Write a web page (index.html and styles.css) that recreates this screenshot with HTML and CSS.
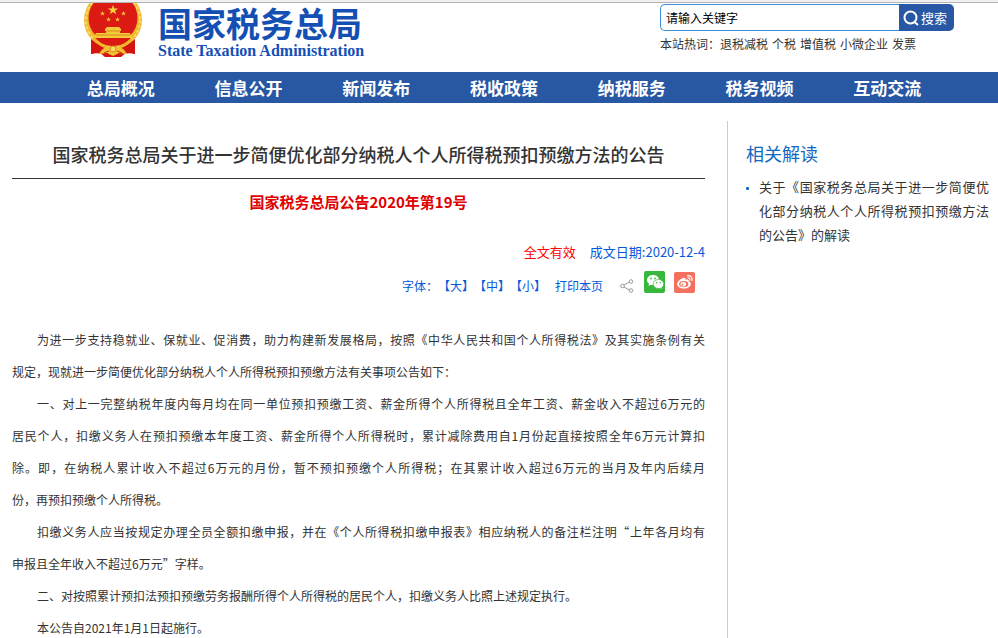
FILE: index.html
```html
<!DOCTYPE html>
<html lang="zh-CN">
<head>
<meta charset="utf-8">
<title>国家税务总局</title>
<link rel="stylesheet" href="styles.css">
</head>
<body>
<header class="header">
  <a class="brand" href="#">
    <svg class="emblem" viewBox="0 0 58 54" aria-hidden="true">
      <path d="M9 36 L7 51 L15 49 L21 54 H37 L43 49 L51 51 L49 36Z" fill="#d3140f"/>
      <circle cx="29" cy="17" r="29" fill="#efb92f"/>
      <circle cx="29" cy="17" r="27" fill="none" stroke="#f9dc68" stroke-width="2" stroke-dasharray="3 2"/>
      <circle cx="29" cy="15" r="24.500" fill="#dc1a14"/>
      <path d="M29 2l1.300 3.500h3.800L31 7.700l1.200 3.600L29 9.100l-3.200 2.200L27 7.700l-3.100-2.200h3.800z" fill="#f7d23c"/>
      <path d="M18.500 8l.7 1.700h1.800l-1.400 1.100.5 1.800-1.600-1-1.600 1 .5-1.800-1.400-1.100h1.800zM39.500 8l.7 1.700h1.800l-1.400 1.100.5 1.800-1.600-1-1.600 1 .5-1.800-1.400-1.100h1.800zM24.500 14l.7 1.700h1.800l-1.400 1.100.5 1.800-1.600-1-1.600 1 .5-1.800-1.400-1.100h1.800zM33.500 14l.7 1.700h1.800l-1.400 1.100.5 1.800-1.600-1-1.600 1 .5-1.800-1.400-1.100h1.800z" fill="#f2c233"/>
      <path d="M21 26l2-2h12l2 2v2h-1v2h10l2 5H10l2-5h10v-2h-1z" fill="#f4c93a"/>
      <path d="M22 28h14M12 32h34" stroke="#d98a1a" stroke-width="1"/>
      <path d="M11 35h36c-4 5-10 8-18 8s-14-3-18-8z" fill="#dc1a14"/>
      <path d="M7 36c4 4 9 7 15 8l-3 7c-5-1-9-1-12 0zM51 36c-4 4-9 7-15 8l3 7c5-1 9-1 12 0z" fill="#d3140f"/>
      <path d="M10 36c4 4 8 7 13 8M48 36c-4 4-8 7-13 8" stroke="#efb62b" stroke-width="3" fill="none"/>
      <path d="M15 51c3-6 8-8 14-8s11 2 14 8l-8-1-6 3-6-3z" fill="#f3c033"/>
      <circle cx="29" cy="46" r="3" fill="#f9dc63" stroke="#d58b19"/>
      <path d="M20 50l5-2M38 50l-5-2" stroke="#c92d10"/>
    </svg>
    <span class="brand-text">
      <span class="brand-cn">国家税务总局</span>
      <span class="brand-en">State Taxation Administration</span>
    </span>
  </a>
  <div class="search-area">
    <form class="search">
      <input class="search-input" type="text" value="请输入关键字" aria-label="请输入关键字">
      <button class="search-button" type="button">
        <svg class="search-icon" viewBox="0 0 16 16" aria-hidden="true"><circle cx="7.500" cy="7.500" r="6"/><path d="M11.500 12l3.500 3"/></svg>搜索
      </button>
    </form>
    <div class="hot"><span>本站热词：</span><a href="#">退税减税</a><a href="#">个税</a><a href="#">增值税</a><a href="#">小微企业</a><a href="#">发票</a></div>
  </div>
</header>
<nav class="nav">
  <a href="#">总局概况</a><a href="#">信息公开</a><a href="#">新闻发布</a><a href="#">税收政策</a><a href="#">纳税服务</a><a href="#">税务视频</a><a href="#">互动交流</a>
</nav>
<main class="main">
  <article class="article">
    <h1 class="title">国家税务总局关于进一步简便优化部分纳税人个人所得税预扣预缴方法的公告</h1>
    <p class="number">国家税务总局公告2020年第19号</p>
    <div class="meta"><span class="valid">全文有效</span><span>成文日期:2020-12-4</span></div>
    <div class="tools">
      <span>字体：</span><button type="button">【大】</button><button type="button">【中】</button><button type="button">【小】</button>
      <button class="print" type="button">打印本页</button>
      <svg class="share" viewBox="0 0 14 14" aria-hidden="true"><path d="M4 6l5.500-3M4 8l5.500 3"/><circle cx="2.500" cy="7" r="1.800"/><circle cx="11" cy="2.500" r="1.800"/><circle cx="11" cy="11.500" r="1.800"/></svg>
      <a class="social" href="#" aria-label="微信">
        <svg viewBox="0 0 22 22"><rect width="21" height="22" rx="2" fill="#37b83c"/><path d="M9 4C5.400 4 3 6.200 3 9c0 1.600.8 2.900 2 3.800L4.500 15l2.400-1.200c.7.200 1.300.2 2.100.2 3.600 0 6-2.200 6-5s-2.400-5-6-5z" fill="#fff"/><path d="M14.500 8.500c-3 0-5.300 2-5.300 4.500s2.300 4.500 5.300 4.500c.7 0 1.200-.1 1.800-.3l2 1.100-.5-1.800c1.200-.8 2-2 2-3.500 0-2.500-2.300-4.500-5.300-4.500z" fill="#fff" stroke="#37b83c" stroke-width=".7"/><g fill="#37b83c"><circle cx="7" cy="7.500" r=".9"/><circle cx="11" cy="7.500" r=".9"/><circle cx="12.800" cy="11.800" r=".8"/><circle cx="16.300" cy="11.800" r=".8"/></g></svg>
      </a>
      <a class="social" href="#" aria-label="微博">
        <svg viewBox="0 0 22 22"><rect y="1" width="21" height="21" rx="2" fill="#f5705f"/><path d="M9 7c1.600-.7 2.800 0 2.300 1.800 2-.8 3.800-.3 3.300 1.500 1.400.5 2.200 1.400 2.200 2.600 0 2.500-3 4.600-6.900 4.600S3.200 15.600 3.200 13C3.200 10.800 6.300 8 9 7z" fill="#fff"/><ellipse cx="9.700" cy="13.100" rx="4.600" ry="3.200" fill="#f5705f"/><ellipse cx="9.200" cy="13.300" rx="2.700" ry="2.300" fill="#fff"/><circle cx="8.500" cy="13.700" r="1" fill="#f5705f"/><path d="M13.500 4.800c3-.6 5.300 1.700 4.500 4.700M13.800 7c1.500-.3 2.500.7 2.100 2.100" fill="none" stroke="#fff" stroke-width="1.200" stroke-linecap="round"/></svg>
      </a>
    </div>
    <div class="content">
      <p><span class="full">为进一步支持稳就业、保就业、促消费，助力构建新发展格局，按照《中华人民共和国个人所得税法》及其实施条例有关</span>规定，现就进一步简便优化部分纳税人个人所得税预扣预缴方法有关事项公告如下：</p>
      <p><span class="full">一、对上一完整纳税年度内每月均在同一单位预扣预缴工资、薪金所得个人所得税且全年工资、薪金收入不超过6万元的</span><span class="full next">居民个人，扣缴义务人在预扣预缴本年度工资、薪金所得个人所得税时，累计减除费用自1月份起直接按照全年6万元计算扣</span><span class="full next">除。即，在纳税人累计收入不超过6万元的月份，暂不预扣预缴个人所得税；在其累计收入超过6万元的当月及年内后续月</span>份，再预扣预缴个人所得税。</p>
      <p><span class="full">扣缴义务人应当按规定办理全员全额扣缴申报，并在《个人所得税扣缴申报表》相应纳税人的备注栏注明“上年各月均有</span>申报且全年收入不超过6万元”字样。</p>
      <p class="short">二、对按照累计预扣法预扣预缴劳务报酬所得个人所得税的居民个人，扣缴义务人比照上述规定执行。</p>
      <p class="short">本公告自2021年1月1日起施行。</p>
    </div>
  </article>
  <aside class="aside">
    <h2 class="aside-title">相关解读</h2>
    <ul class="related">
      <li><a href="#">关于《国家税务总局关于进一步简便优化部分纳税人个人所得税预扣预缴方法的公告》的解读</a></li>
    </ul>
  </aside>
</main>
</body>
</html>
```
FILE: styles.css
```css
* { box-sizing: border-box; }
html { scrollbar-width: none; }
body {
  margin: 0;
  min-height: 100vh;
  display: flex;
  flex-direction: column;
  background: #fff;
  color: #333;
  font: 12px/24px "Noto Sans CJK SC", sans-serif;
  text-spacing-trim: space-all;
}
a { color: inherit; text-decoration: none; }
h1, h2, p, ul { margin: 0; padding: 0; font-weight: 400; }
button { border: 0; padding: 0; background: none; color: inherit; font: inherit; }

.header {
  display: flex;
  justify-content: space-between;
  height: 72px;
  padding: 1px 44px 0 84px;
  border-top: 2px solid #f0f0f0;
  box-shadow: inset 0 1px #b4b4b4;
}
.brand { display: flex; gap: 16px; }
.emblem { width: 58px; height: 54px; }
.brand-text { display: flex; flex-direction: column; color: #1450b4; font-weight: 700; white-space: nowrap; }
.brand-cn { font-size: 34px; line-height: 40px; }
.brand-en { font: 700 16px/16px "Liberation Serif", serif; }

.search-area { width: 294px; padding-top: 1px; }
.search { display: flex; height: 27px; }
.search-input {
  flex: 1;
  min-width: 0;
  padding: 0 5px;
  border: 1px solid #3a8dd8;
  border-right: 0;
  border-radius: 5px 0 0 5px;
  color: #000;
  font: inherit;
}
.search-button {
  display: flex;
  align-items: center;
  gap: 2px;
  width: 55px;
  padding-left: 4px;
  border-radius: 0 5px 5px 0;
  background: #2857a3;
  color: #fff;
  font-size: 13px;
}
.search-icon { width: 16px; height: 16px; fill: none; stroke: #fff; stroke-width: 2; }
.hot { display: flex; margin-top: 1px; white-space: nowrap; }
.hot a + a { margin-left: 4px; }

.nav {
  display: grid;
  grid-template-columns: repeat(7, 1fr);
  padding: 0 47px 0 57px;
  background: #2857a3;
  color: #fff;
  font-size: 17px;
  font-weight: 700;
  line-height: 31px;
  text-align: center;
}

.main { flex: 1; display: flex; gap: 22px; padding: 18px 0 0 12px; }
.article { flex: 1; min-width: 0; }
.title {
  margin-top: 17px;
  padding-bottom: 8px;
  border-bottom: 1px solid #333;
  font-size: 18px;
  font-weight: 500;
  line-height: 32px;
  text-align: center;
}
.number { margin-top: 11px; color: #e00000; font-size: 15px; font-weight: 700; text-align: center; }
.meta { display: flex; justify-content: flex-end; gap: 14px; margin-top: 26px; color: #0559d8; font-size: 13px; }
.valid { color: #f00; }
.tools {
  display: flex;
  justify-content: flex-end;
  margin-top: 7px;
  padding-right: 9px;
  color: #0559d8;
  line-height: 30px;
}
.print { margin-left: 9px; }
.share { width: 14px; height: 14px; margin: 8px 10px 0 17px; fill: none; stroke: #999; }
.social { width: 22px; height: 22px; }
.social + .social { margin-left: 8px; }
.social svg { display: block; }

.content { margin-top: 23px; line-height: 32px; white-space: nowrap; }
.full { display: block; text-align: justify; text-align-last: justify; white-space: normal; text-indent: 25px; }
.next { text-indent: 0; }
.short { text-indent: 25px; }

.aside { width: 271px; padding: 16px 9px 0 18px; border-left: 1px solid #ccc; }
.aside-title { color: #1468c0; font-size: 18px; line-height: 32px; }
.related { margin-top: 6px; list-style: none; font-size: 13px; }
.related li { display: flex; text-align: justify; }
.related li::before { content: ""; flex: none; width: 3px; height: 3px; margin: 12px 10px 0 0; border-radius: 1px; background: #1468c0; }
```
